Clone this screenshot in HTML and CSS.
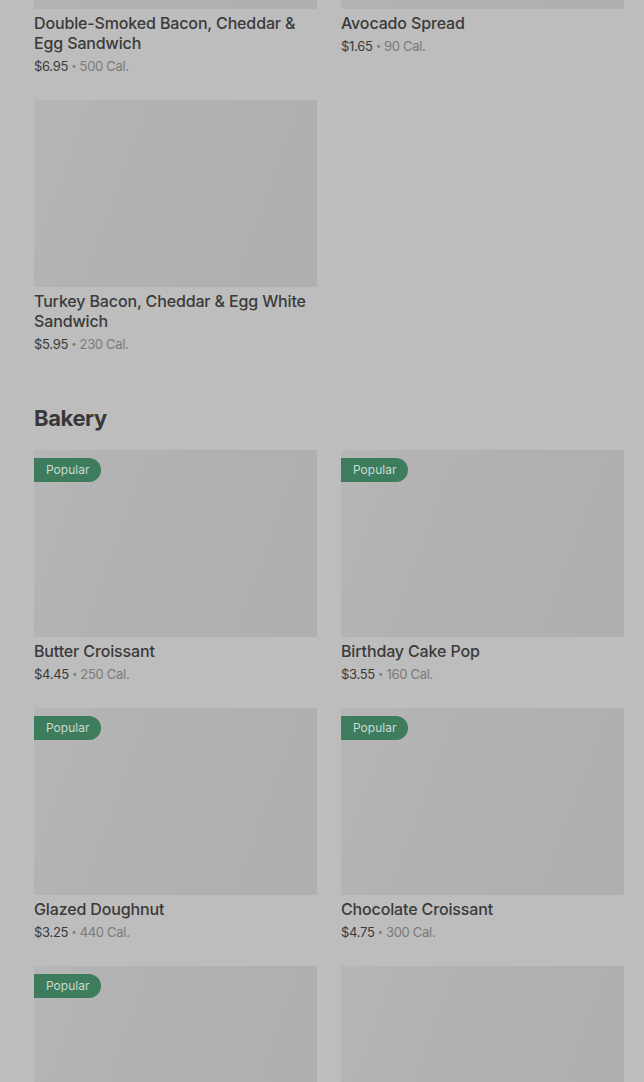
FILE: index.html
```
<!DOCTYPE html>
<html>
<head>
<meta charset="utf-8">
<link rel="stylesheet" href="styles.css">
</head>
<body>
<div class="page">
  <section class="section">
    <div class="grid">
      <div class="card">
        <div class="img"></div>
        <div class="title">Double-Smoked Bacon, Cheddar &amp; Egg Sandwich</div>
        <div class="meta"><span class="price">$6.95</span> <span class="dot">•</span> <span class="cal">500 Cal.</span></div>
      </div>
      <div class="card">
        <div class="img"></div>
        <div class="title">Avocado Spread</div>
        <div class="meta"><span class="price">$1.65</span> <span class="dot">•</span> <span class="cal">90 Cal.</span></div>
      </div>
      <div class="card">
        <div class="img"></div>
        <div class="title">Turkey Bacon, Cheddar &amp; Egg White Sandwich</div>
        <div class="meta"><span class="price">$5.95</span> <span class="dot">•</span> <span class="cal">230 Cal.</span></div>
      </div>
    </div>
  </section>
  <section class="section">
    <h2 class="heading">Bakery</h2>
    <div class="grid">
      <div class="card">
        <div class="img"><span class="badge">Popular</span></div>
        <div class="title">Butter Croissant</div>
        <div class="meta"><span class="price">$4.45</span> <span class="dot">•</span> <span class="cal">250 Cal.</span></div>
      </div>
      <div class="card">
        <div class="img"><span class="badge">Popular</span></div>
        <div class="title">Birthday Cake Pop</div>
        <div class="meta"><span class="price">$3.55</span> <span class="dot">•</span> <span class="cal">160 Cal.</span></div>
      </div>
      <div class="card">
        <div class="img"><span class="badge">Popular</span></div>
        <div class="title">Glazed Doughnut</div>
        <div class="meta"><span class="price">$3.25</span> <span class="dot">•</span> <span class="cal">440 Cal.</span></div>
      </div>
      <div class="card">
        <div class="img"><span class="badge">Popular</span></div>
        <div class="title">Chocolate Croissant</div>
        <div class="meta"><span class="price">$4.75</span> <span class="dot">•</span> <span class="cal">300 Cal.</span></div>
      </div>
      <div class="card">
        <div class="img"><span class="badge">Popular</span></div>
      </div>
      <div class="card">
        <div class="img"></div>
      </div>
    </div>
  </section>
</div>
</body>
</html>
```
FILE: styles.css
```
html, body {
  margin: 0;
  padding: 0;
  background: #bdbdbd;
  overflow: hidden;
}
body {
  font-family: Inter, Roboto, "Liberation Sans", sans-serif;
  color: #3a3a3a;
}
.page {
  padding: 0 20px 0 34px;
  margin-top: -178px;
}
.section {
  margin-bottom: 50px;
}
.grid {
  display: grid;
  grid-template-columns: 283px 283px;
  column-gap: 24px;
  row-gap: 25px;
}
.card {
  display: flex;
  flex-direction: column;
}
.img {
  position: relative;
  height: 187px;
  background: linear-gradient(110deg, #b6b6b6 0%, #b1b1b1 40%, #afafaf 100%);
}
.badge {
  position: absolute;
  left: 0;
  top: 8px;
  height: 24px;
  line-height: 24px;
  padding: 0 12px;
  background: #3e7c5e;
  color: #c9dcd2;
  font-size: 12px;
  border-radius: 0 12px 12px 0;
}
.title {
  margin-top: 4px;
  font-size: 16px;
  line-height: 20px;
  font-weight: 500;
  letter-spacing: -0.14px;
  color: #3a3a3a;
}
.meta {
  margin-top: 4px;
  height: 18px;
  font-size: 13px;
  line-height: 18px;
  letter-spacing: -0.3px;
  color: #777;
}
.price {
  color: #3a3a3a;
}
.dot {
  display: inline-block;
  font-size: 9px;
  line-height: 18px;
  height: 18px;
  vertical-align: top;
  color: #7a7a7a;
}
.cal {
  color: #7a7a7a;
}
.heading {
  margin: 0 0 17px 0;
  font-size: 22px;
  line-height: 30px;
  font-weight: 700;
  color: #383838;
  letter-spacing: -0.4px;
}
```
